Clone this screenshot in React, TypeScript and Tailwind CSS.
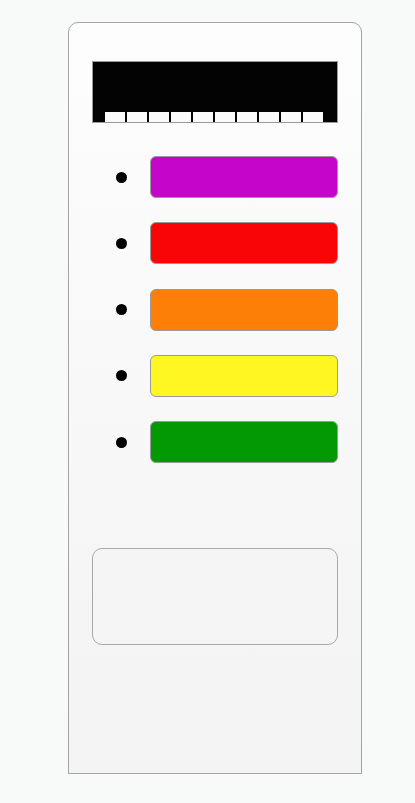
import React from 'react';

const bars = ['#c505c9', '#f90505', '#fd7f07', '#fff622', '#029902'];

export default function App() {
  return (
    <div className="min-h-[803px] w-full bg-[#f8faf9] pt-[22px] pl-[68px]">
      <div className="flex h-[752px] w-[294px] flex-col rounded-t-[10px] border border-[#a3a3a3] bg-gradient-to-b from-[#fdfdfd] to-[#f3f3f3] px-[23px] pt-[38px]">
        {/* display */}
        <div className="flex h-[62px] w-[246px] items-end gap-[2px] border border-[#9a9a9a] bg-[#030303] pl-[12px]">
          {Array.from({ length: 10 }).map((_, i) => (
            <div key={i} className="h-[10px] w-[20px] bg-[#fafafa]" />
          ))}
        </div>

        {/* colour rows */}
        <div className="mt-[33px] flex flex-col gap-[24.25px]">
          {bars.map((c) => (
            <div key={c} className="flex items-center">
              <div className="ml-[24px] h-[11px] w-[11px] rounded-full bg-black" />
              <div
                className="ml-auto h-[42px] w-[188px] rounded-[6px] border border-[#9a9a9a]"
                style={{ backgroundColor: c }}
              />
            </div>
          ))}
        </div>

        {/* empty panel */}
        <div className="mt-[85px] h-[97px] w-[246px] rounded-[10px] border border-[#a8a8a8] bg-[#f5f5f5]" />
      </div>
    </div>
  );
}
